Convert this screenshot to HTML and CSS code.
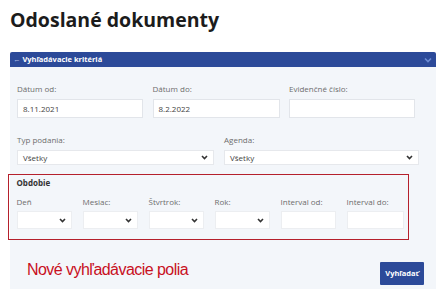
FILE: index.html
```html
<!DOCTYPE html>
<html lang="sk">
<head>
<meta charset="utf-8">
<title>Odoslané dokumenty</title>
<link rel="stylesheet" href="styles.css">
</head>
<body>
<div class="page">
  <h1 class="title">Odoslané dokumenty</h1>
  <div class="panel">
    <div class="panel-head">
      <span class="head-text"><span class="arrow">←</span> Vyhľadávacie kritériá</span>
      <svg class="head-chev" width="8" height="6" viewBox="0 0 8 6"><path d="M1 1.5 L4 4.5 L7 1.5" fill="none" stroke="#6d8bd3" stroke-width="1.6"/></svg>
    </div>
    <div class="panel-body">
      <div class="row row3">
        <div class="field"><div class="label">Dátum od:</div><div class="input">8.11.2021</div></div>
        <div class="field"><div class="label">Dátum do:</div><div class="input">8.2.2022</div></div>
        <div class="field"><div class="label">Evidenčné číslo:</div><div class="input"></div></div>
      </div>
      <div class="row row2">
        <div class="field"><div class="label">Typ podania:</div><div class="select">Všetky<svg class="chev" width="7" height="5" viewBox="0 0 7 5"><path d="M1 1 L3.5 3.5 L6 1" fill="none" stroke="#333" stroke-width="1.6"/></svg></div></div>
        <div class="field"><div class="label">Agenda:</div><div class="select">Všetky<svg class="chev" width="7" height="5" viewBox="0 0 7 5"><path d="M1 1 L3.5 3.5 L6 1" fill="none" stroke="#333" stroke-width="1.6"/></svg></div></div>
      </div>
      <div class="period">
        <div class="period-title">Obdobie</div>
        <div class="row6">
          <div class="field"><div class="label">Deň</div><div class="box"><svg class="chev" width="7" height="5" viewBox="0 0 7 5"><path d="M1 1 L3.5 3.5 L6 1" fill="none" stroke="#333" stroke-width="1.6"/></svg></div></div>
          <div class="field"><div class="label">Mesiac:</div><div class="box"><svg class="chev" width="7" height="5" viewBox="0 0 7 5"><path d="M1 1 L3.5 3.5 L6 1" fill="none" stroke="#333" stroke-width="1.6"/></svg></div></div>
          <div class="field"><div class="label">Štvrtrok:</div><div class="box"><svg class="chev" width="7" height="5" viewBox="0 0 7 5"><path d="M1 1 L3.5 3.5 L6 1" fill="none" stroke="#333" stroke-width="1.6"/></svg></div></div>
          <div class="field"><div class="label">Rok:</div><div class="box"><svg class="chev" width="7" height="5" viewBox="0 0 7 5"><path d="M1 1 L3.5 3.5 L6 1" fill="none" stroke="#333" stroke-width="1.6"/></svg></div></div>
          <div class="field"><div class="label">Interval od:</div><div class="box"></div></div>
          <div class="field"><div class="label">Interval do:</div><div class="box wide"></div></div>
        </div>
      </div>
      <div class="footer">
        <div class="note">Nové vyhľadávacie polia</div>
        <div class="button">Vyhľadať</div>
      </div>
    </div>
  </div>
</div>
</body>
</html>
```
FILE: styles.css
```css
html, body {
  margin: 0;
  padding: 0;
  background: #ffffff;
  height: 289px;
  overflow: hidden;
}
body {
  font-family: "Open Sans", "Liberation Sans", sans-serif;
  color: #333;
}
.page {
  padding: 6px 4px 0 10px;
}
.title {
  margin: 0 0 18px 0;
  font-size: 19.5px;
  line-height: 28px;
  font-weight: 700;
  color: #1c1c1c;
}
.panel {
  width: 426px;
}
.panel-head {
  height: 15px;
  background: #2c4a99;
  display: flex;
  align-items: center;
  justify-content: space-between;
  padding: 0 4px 0 3px;
  border-radius: 2px 2px 0 0;
}
.head-text {
  color: #fff;
  font-size: 7.5px;
  font-weight: 700;
  line-height: 15px;
}
.arrow {
  font-weight: 400;
  color: #aebde6;
}
.head-chev {
  display: block;
}
.panel-body {
  background: #f3f6fa;
  padding: 16px 0 0 7px;
  height: 206px;
}
.label {
  font-size: 8px;
  line-height: 11px;
  color: #6d6d6d;
  white-space: nowrap;
}
.row3 {
  display: grid;
  grid-template-columns: 126px 127px 126px;
  column-gap: 9.5px;
}
.row3 .label {
  margin-bottom: 5px;
}
.input {
  height: 19px;
  box-sizing: border-box;
  background: #fff;
  border: 1px solid #e2e5ea;
  font-size: 8px;
  line-height: 17px;
  padding-left: 5px;
  color: #444;
}
.row2 {
  display: grid;
  grid-template-columns: 197px 195px;
  column-gap: 10px;
  margin-top: 16px;
}
.row2 .label {
  margin-bottom: 5px;
}
.select {
  height: 15px;
  box-sizing: border-box;
  background: #fff;
  border: 1px solid #e6e8ec;
  font-size: 8px;
  line-height: 13px;
  padding: 0 5px;
  color: #444;
  display: flex;
  justify-content: space-between;
  align-items: center;
}
.chev {
  display: block;
}
.period {
  margin: 9px 0 0 -9px;
  width: 401px;
  height: 66px;
  box-sizing: border-box;
  border: 1.5px solid #b5202c;
  padding: 2px 0 0 7.5px;
}
.period-title {
  font-size: 8px;
  font-weight: 700;
  line-height: 11px;
  color: #333;
}
.row6 {
  display: grid;
  grid-template-columns: repeat(6, 55px);
  column-gap: 11px;
  margin-top: 8px;
}
.row6 .label {
  margin-bottom: 4px;
}
.box {
  height: 18px;
  box-sizing: border-box;
  background: #fff;
  border: 1px solid #eceef1;
  display: flex;
  justify-content: flex-end;
  align-items: center;
  padding-right: 5px;
}
.box.wide {
  width: 57px;
}
.footer {
  display: flex;
  justify-content: space-between;
  align-items: flex-start;
  margin-top: 22px;
  padding-right: 12px;
}
.note {
  font-family: "Liberation Sans", sans-serif;
  font-size: 16px;
  line-height: 18px;
  letter-spacing: -0.55px;
  color: #c8101e;
  margin: -1px 0 0 10px;
}
.button {
  width: 44px;
  height: 23px;
  background: #2c4a99;
  color: #fff;
  font-size: 7.5px;
  font-weight: 700;
  line-height: 23px;
  text-align: center;
  border-radius: 1px;
}
```
